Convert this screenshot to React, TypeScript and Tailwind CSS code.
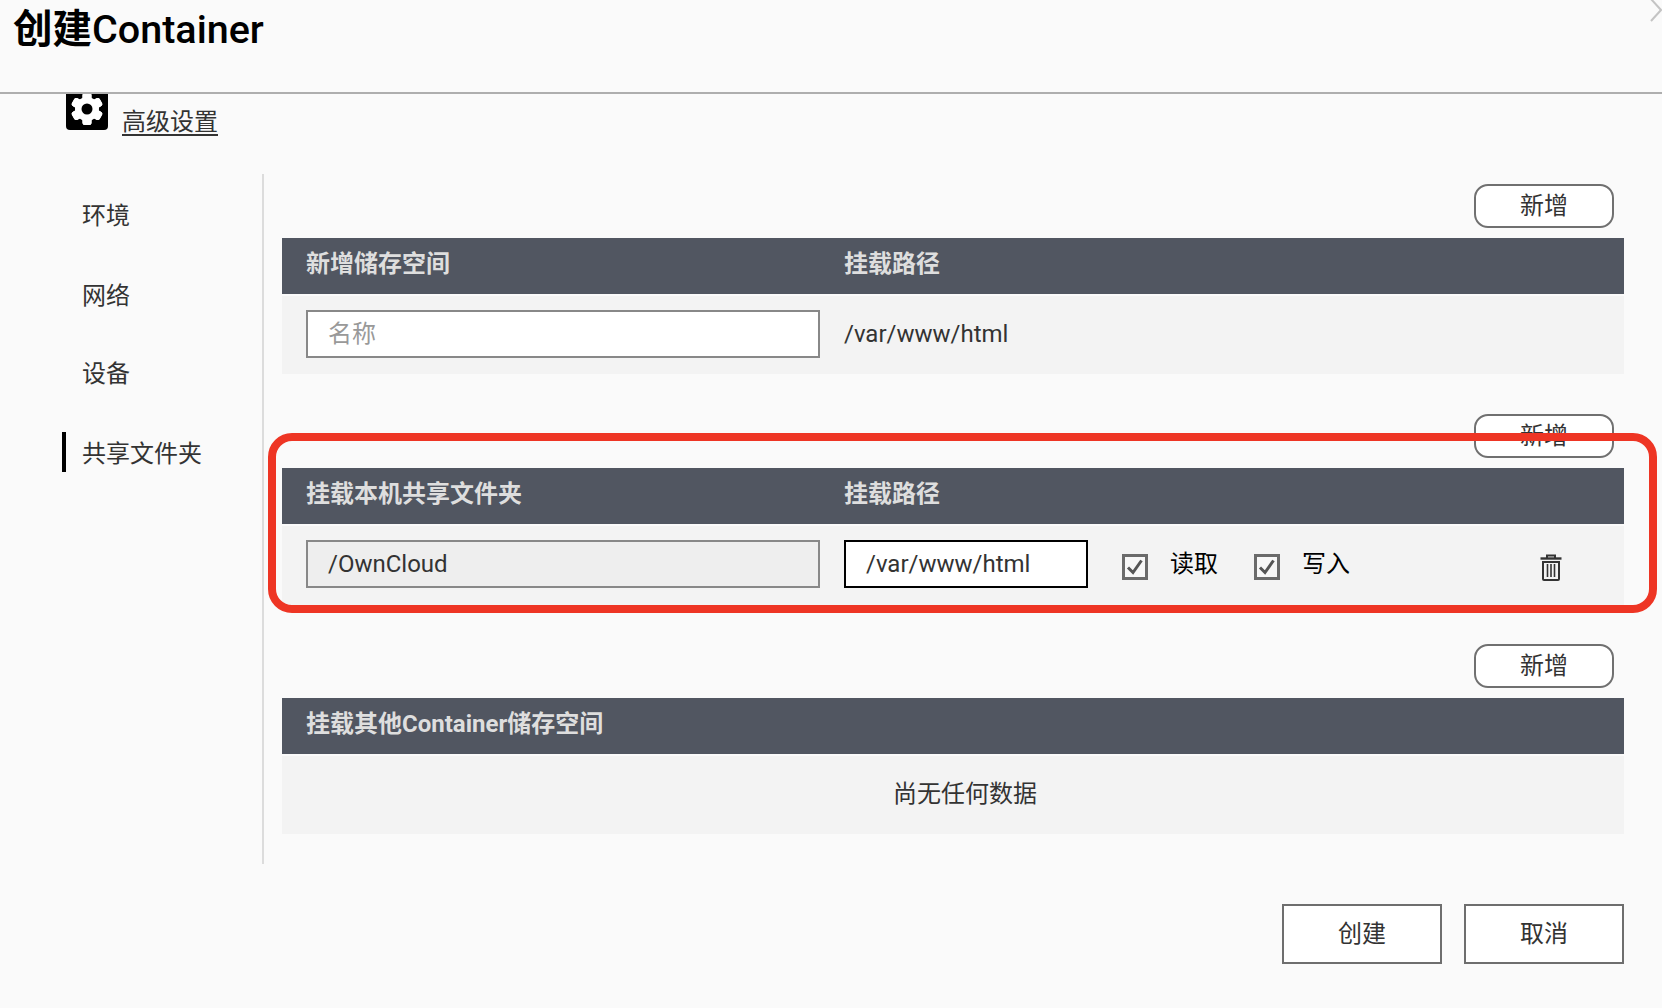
const font = { fontFamily: 'Roboto, "Noto Sans CJK SC", sans-serif' };

function AddButton() {
  return (
    <div className="flex justify-end pr-[10px]">
      <button className="w-[140px] h-[44px] rounded-[14px] border-2 border-[#707070] bg-white text-[24px] leading-[40px] text-[#333]">
        新增
      </button>
    </div>
  );
}

function HeaderBar({ first, second }: { first: string; second?: string }) {
  return (
    <div className="mt-[10px] h-[56px] pb-[4px] bg-[#515661] flex items-center text-[24px] font-bold text-[#dedede]">
      <div className="w-[562px] pl-[24px]">{first}</div>
      {second && <div>{second}</div>}
    </div>
  );
}

function Check() {
  return (
    <span className="w-[26px] h-[26px] mt-[3px] border-[3px] border-[#6a6a6a] bg-[#f7f7f7] flex items-center justify-center">
      <svg width="20" height="20" viewBox="0 0 20 20" fill="none">
        <path d="M3 10.5 L8 15.5 L16.5 3.5" stroke="#555" strokeWidth="3" />
      </svg>
    </span>
  );
}

function Trash() {
  return (
    <svg width="22" height="27" viewBox="0 0 22 27" fill="none" stroke="#333" strokeWidth="2">
      <path d="M7 4 V1.5 H15 V4" />
      <path d="M0.5 4.5 H21.5" strokeWidth="2.4" />
      <path d="M3 8 H19 V25 A1 1 0 0 1 18 26 H4 A1 1 0 0 1 3 25 Z" />
      <path d="M7.5 10 V23 M11 10 V23 M14.5 10 V23" strokeWidth="1.6" />
    </svg>
  );
}

function Gear() {
  const teeth = [0, 60, 120, 180, 240, 300];
  return (
    <div className="ml-[66px] w-[42px] h-[36px] bg-black rounded-b-[4px] flex justify-center shrink-0 overflow-hidden">
      <svg className="shrink-0 -mt-[2px]" width="34" height="34" viewBox="0 0 34 34">
        {teeth.map((a) => (
          <rect key={a} x="12.5" y="1" width="9" height="32" rx="2.5" fill="#fff" transform={`rotate(${a} 17 17)`} />
        ))}
        <circle cx="17" cy="17" r="12" fill="#fff" />
        <circle cx="17" cy="17" r="5.5" fill="#000" />
      </svg>
    </div>
  );
}

export default function App() {
  return (
    <div className="relative w-[1662px] h-[1008px] overflow-hidden bg-[#fafafa] text-[#333]" style={font}>
      <header className="h-[94px] border-b-2 border-[#aeaeae] pl-[13px] pt-[4px]">
        <h1 className="text-[39.5px] leading-[52px] font-medium text-black">
          <span className="font-bold">创建</span>Container
        </h1>
      </header>
      <svg className="absolute right-0 top-0" width="12" height="22" viewBox="0 0 12 22" fill="none">
        <path d="M1 -1 L11 10 L1 21" stroke="#c4c4c4" strokeWidth="2" />
      </svg>

      <div className="h-[80px] flex items-start">
        <Gear />
        <span className="ml-[14px] mt-[10px] text-[24px] leading-[36px] underline underline-offset-[4px]">高级设置</span>
      </div>

      <div className="flex h-[690px]">
        <nav className="w-[264px] border-r-2 border-[#dcdcdc] text-[24px] leading-[40px]">
          <div className="pl-[82px] mt-[22px]">环境</div>
          <div className="pl-[82px] mt-[40px]">网络</div>
          <div className="pl-[82px] mt-[38px]">设备</div>
          <div className="ml-[62px] mt-[38px] border-l-4 border-black pl-[16px]">
            <span className="relative top-[2px]">共享文件夹</span>
          </div>
        </nav>

        <main className="w-[1342px] ml-[18px] pt-[10px]">
          <section className="h-[230px]">
            <AddButton />
            <HeaderBar first="新增储存空间" second="挂载路径" />
            <div className="mt-[2px] h-[78px] pb-[3px] bg-[#f3f3f3] flex items-center pl-[24px]">
              <div className="w-[514px] h-[48px] border-2 border-[#888] bg-white pl-[20px] text-[24px] leading-[44px] text-[#999]">名称</div>
              <div className="ml-[24px] text-[24px]">/var/www/html</div>
            </div>
          </section>

          <section className="h-[230px]">
            <AddButton />
            <HeaderBar first="挂载本机共享文件夹" second="挂载路径" />
            <div className="mt-[2px] h-[79px] pb-[3px] bg-[#f3f3f3] flex items-center pl-[24px] text-[24px]">
              <div className="w-[514px] h-[48px] border-2 border-[#888] bg-[#eeeeee] pl-[20px] leading-[44px]">/OwnCloud</div>
              <div className="ml-[24px] w-[244px] h-[48px] border-2 border-black bg-white pl-[20px] leading-[44px]">/var/www/html</div>
              <div className="ml-[34px] mt-[3px]"><Check /></div>
              <span className="ml-[22px] text-black">读取</span>
              <div className="ml-[36px] mt-[3px]"><Check /></div>
              <span className="ml-[22px] text-black">写入</span>
              <div className="ml-[190px] mt-[7px]"><Trash /></div>
            </div>
          </section>

          <section>
            <AddButton />
            <HeaderBar first="挂载其他Container储存空间" />
            <div className="mt-[2px] h-[78px] pb-[2px] bg-[#f3f3f3] flex items-center justify-center pl-[24px] text-[24px]">尚无任何数据</div>
          </section>
        </main>
      </div>

      <div className="mt-[40px] flex justify-end gap-[22px] pr-[38px]">
        <button className="w-[160px] h-[60px] border-2 border-[#6e6e6e] bg-white text-[24px]">创建</button>
        <button className="w-[160px] h-[60px] border-2 border-[#6e6e6e] bg-white text-[24px]">取消</button>
      </div>

      <div className="absolute left-[268px] top-[433px] w-[1389px] h-[180px] rounded-[24px] border-8 border-[#ee3524]"></div>
    </div>
  );
}
